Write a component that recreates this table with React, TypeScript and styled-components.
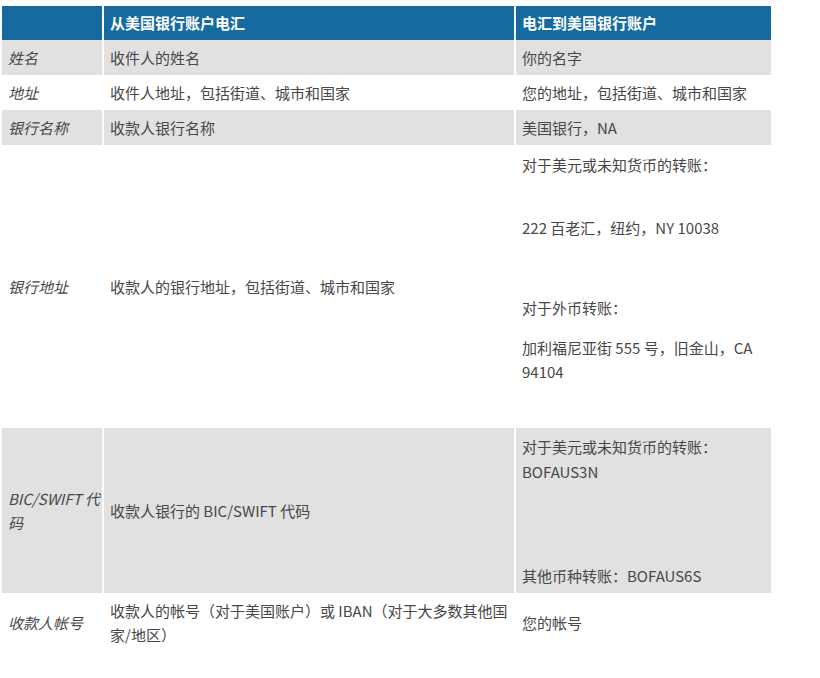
import React from "react";
import styled, { createGlobalStyle } from "styled-components";

const GlobalStyle = createGlobalStyle`
  body {
    margin: 0;
    background: #ffffff;
    font-family: "Noto Sans CJK SC", "Noto Sans", sans-serif;
  }
`;

const Page = styled.div`
  padding: 6px 0 0 2px;
`;

const Table = styled.table`
  width: 769px;
  table-layout: fixed;
  border-collapse: collapse;
  border-spacing: 0;
  font-size: 15px;
  line-height: 24px;
  color: #474747;
`;

const HeadCell = styled.th`
  background: #156ba0;
  color: #ffffff;
  font-weight: 700;
  text-align: left;
  padding: 5px 2px 5px 6px;
  border-right: 2px solid #ffffff;
  &:last-child {
    border-right: none;
  }
`;

const BodyRow = styled.tr<{ $shaded: boolean }>`
  background: ${(p) => (p.$shaded ? "#e1e1e1" : "#ffffff")};
`;

const Cell = styled.td`
  padding: 6px 2px 5px 6px;
  vertical-align: middle;
  border-right: 2px solid #ffffff;
  &:last-child {
    border-right: none;
  }
`;

const LabelCell = styled(Cell)`
  font-style: italic;
  padding-left: 6px;
  padding-right: 0;
`;

const Para = styled.p<{ $top?: number; $bottom?: number }>`
  margin: ${(p) => p.$top ?? 0}px 0 ${(p) => p.$bottom ?? 0}px;
`;

interface Row {
  label: React.ReactNode;
  from: React.ReactNode;
  to: React.ReactNode;
  shaded: boolean;
}

const rows: Row[] = [
  { label: "姓名", from: "收件人的姓名", to: "你的名字", shaded: true },
  {
    label: "地址",
    from: "收件人地址，包括街道、城市和国家",
    to: "您的地址，包括街道、城市和国家",
    shaded: false,
  },
  { label: "银行名称", from: "收款人银行名称", to: "美国银行，NA", shaded: true },
  {
    label: "银行地址",
    from: "收款人的银行地址，包括街道、城市和国家",
    to: (
      <>
        <Para $top={2}>对于美元或未知货币的转账：</Para>
        <Para $top={39}>222 百老汇，纽约，NY 10038</Para>
        <Para $top={56}>对于外币转账：</Para>
        <Para $top={16} $bottom={39}>
          加利福尼亚街 555 号，旧金山，CA 94104
        </Para>
      </>
    ),
    shaded: false,
  },
  {
    label: "BIC/SWIFT 代码",
    from: "收款人银行的 BIC/SWIFT 代码",
    to: (
      <>
        <Para $top={1}>对于美元或未知货币的转账：</Para>
        <Para $top={1}>BOFAUS3N</Para>
        <Para $top={80}>其他币种转账：BOFAUS6S</Para>
      </>
    ),
    shaded: true,
  },
  {
    label: "收款人帐号",
    from: "收款人的帐号（对于美国账户）或 IBAN（对于大多数其他国家/地区）",
    to: "您的帐号",
    shaded: false,
  },
];

const App = () => {
  return (
    <Page>
      <GlobalStyle />
      <Table>
        <colgroup>
          <col style={{ width: 101 }} />
          <col style={{ width: 412 }} />
          <col style={{ width: 256 }} />
        </colgroup>
        <thead>
          <tr>
            <HeadCell />
            <HeadCell>从美国银行账户电汇</HeadCell>
            <HeadCell>电汇到美国银行账户</HeadCell>
          </tr>
        </thead>
        <tbody>
          {rows.map((row, i) => (
            <BodyRow key={i} $shaded={row.shaded}>
              <LabelCell>{row.label}</LabelCell>
              <Cell>{row.from}</Cell>
              <Cell>{row.to}</Cell>
            </BodyRow>
          ))}
        </tbody>
      </Table>
    </Page>
  );
};

export default App;
